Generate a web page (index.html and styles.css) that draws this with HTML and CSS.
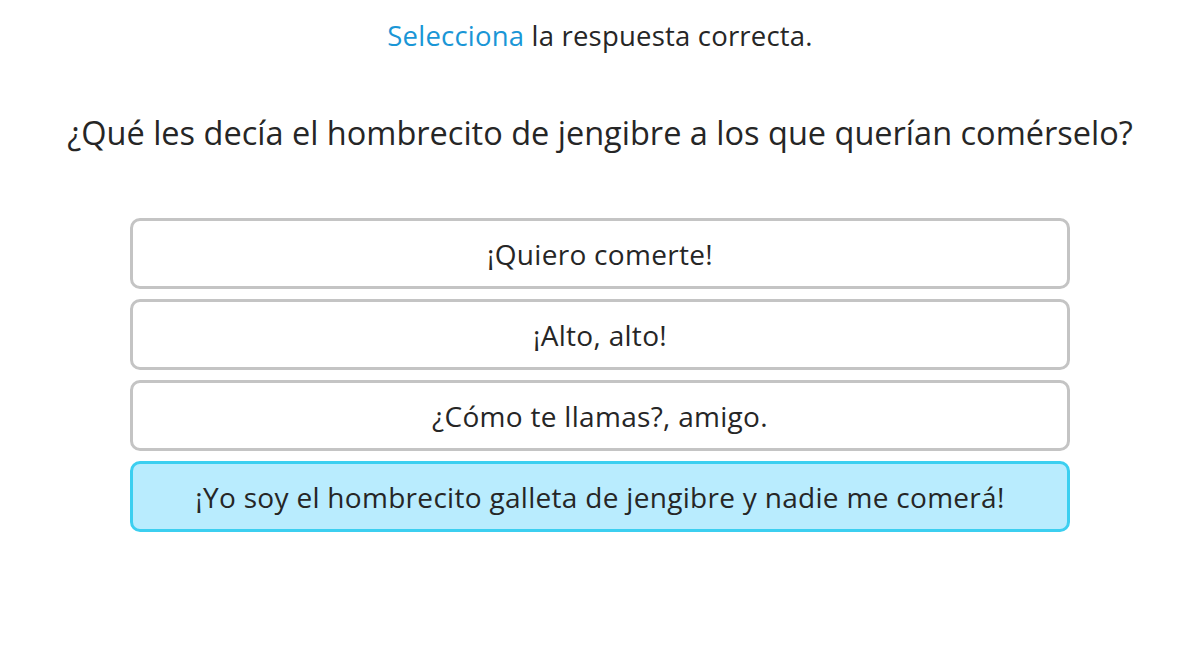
FILE: index.html
```html
<!DOCTYPE html>
<html lang="es">
<head>
<meta charset="utf-8">
<link rel="stylesheet" href="styles.css">
</head>
<body>
<main class="quiz">
  <p class="instruction"><span class="hl">Selecciona</span> la respuesta correcta.</p>
  <h1 class="question">¿Qué les decía el hombrecito de jengibre a los que querían comérselo?</h1>
  <div class="options">
    <div class="option">¡Quiero comerte!</div>
    <div class="option">¡Alto, alto!</div>
    <div class="option">¿Cómo te llamas?, amigo.</div>
    <div class="option selected">¡Yo soy el hombrecito galleta de jengibre y nadie me comerá!</div>
  </div>
</main>
</body>
</html>
```
FILE: styles.css
```css
html, body {
  margin: 0;
  padding: 0;
  background: #ffffff;
  overflow: hidden;
}
body {
  font-family: "Open Sans", "Noto Sans", sans-serif;
  color: #262626;
}
.quiz {
  width: 1200px;
  display: flex;
  flex-direction: column;
  align-items: center;
}
.instruction {
  margin: 16px 0 0 0;
  font-size: 27.5px;
  line-height: 40px;
  text-align: center;
  letter-spacing: 0.2px;
}
.hl {
  color: #1a96d6;
}
.question {
  margin: 56px 0 0 0;
  font-size: 32.5px;
  font-weight: 400;
  line-height: 42px;
  text-align: center;
}
.options {
  margin-top: 64px;
  width: 940px;
  display: flex;
  flex-direction: column;
  gap: 10px;
}
.option {
  box-sizing: border-box;
  height: 71px;
  border: 3px solid #c4c4c4;
  border-radius: 10px;
  display: flex;
  align-items: center;
  justify-content: center;
  font-size: 28px;
  letter-spacing: 0.3px;
  background: #ffffff;
}
.option.selected {
  background: #b9ecfe;
  border-color: #3ccff0;
}
```
